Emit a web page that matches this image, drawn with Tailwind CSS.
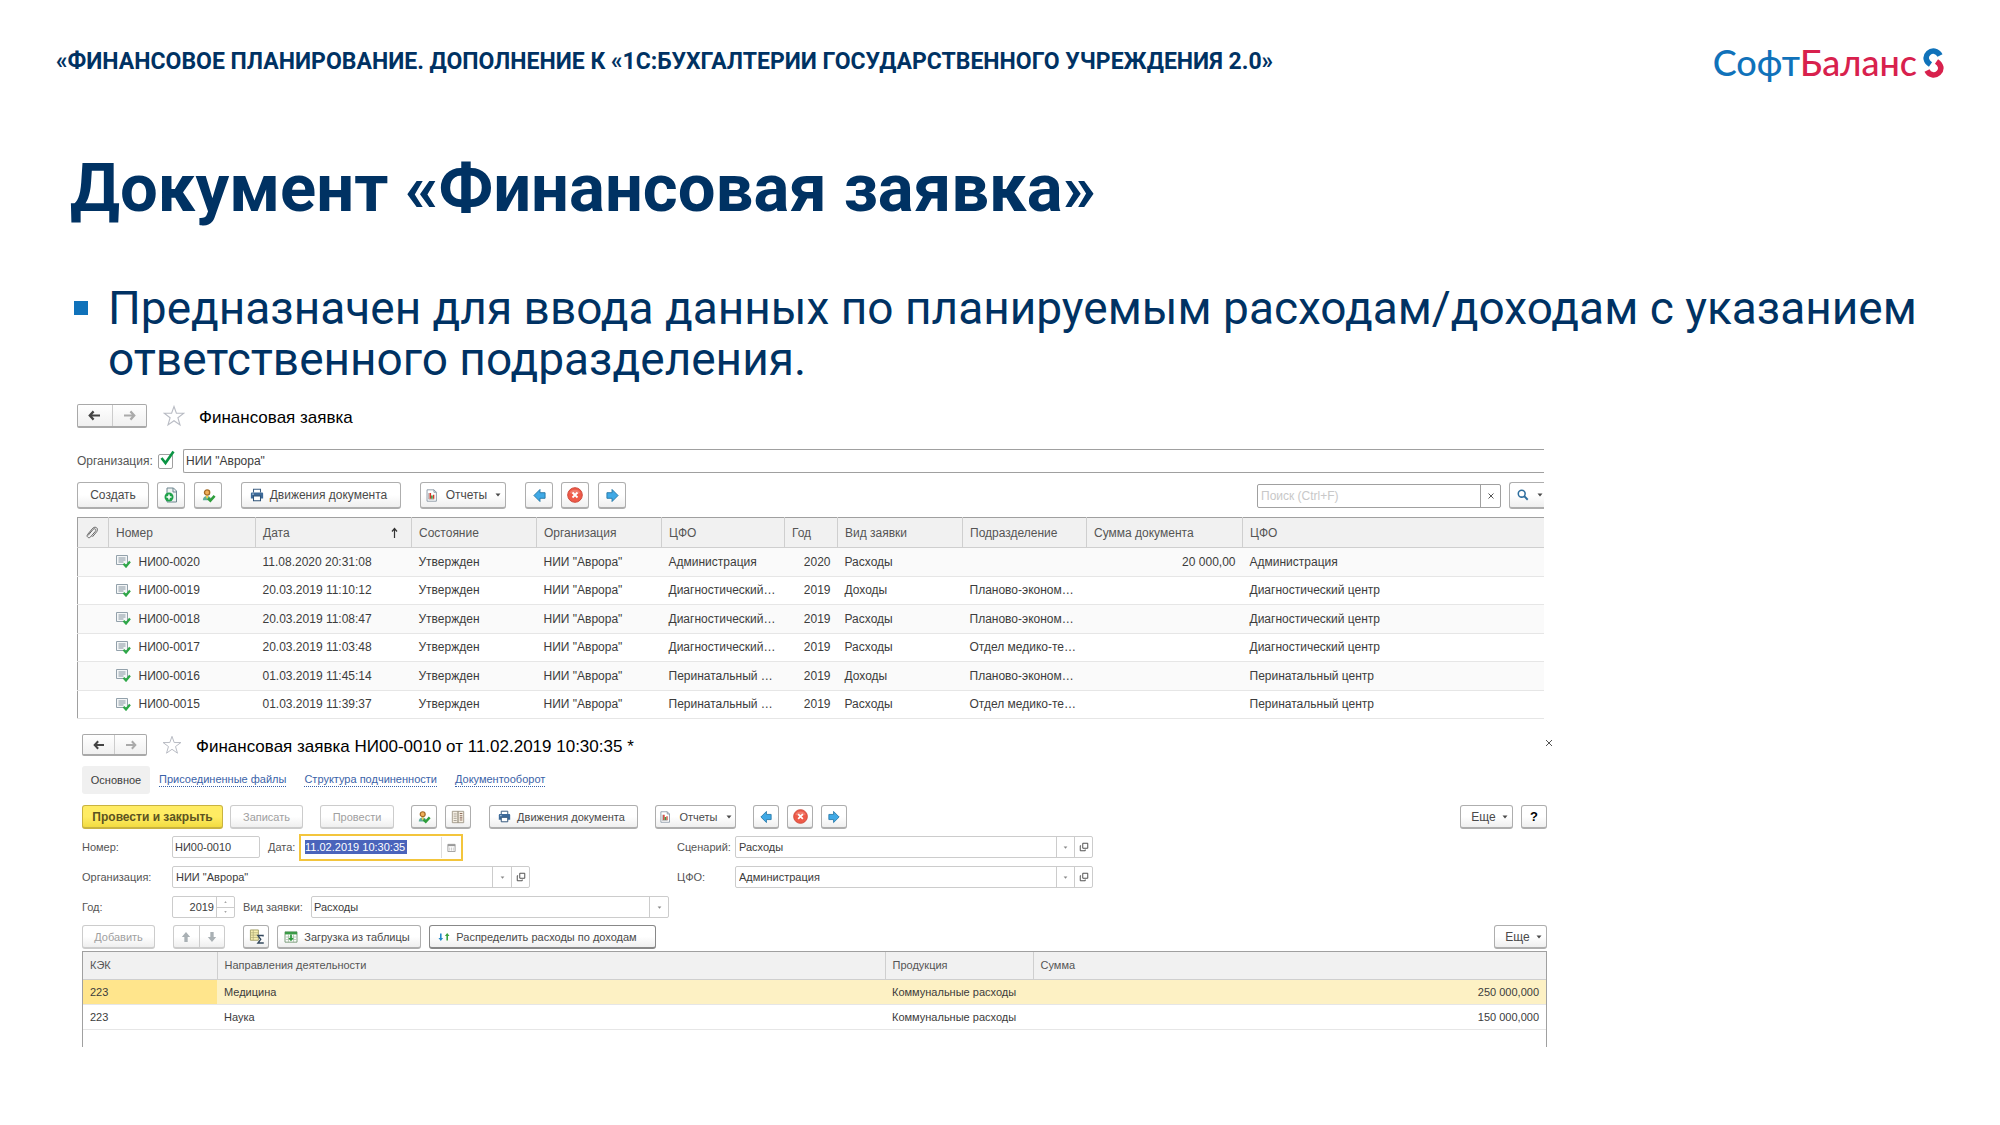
<!DOCTYPE html>
<html lang="ru">
<head>
<meta charset="utf-8">
<title>Документ «Финансовая заявка»</title>
<script src="https://cdn.jsdelivr.net/npm/@tailwindcss/browser@4"></script>
</head>
<body class="bg-white font-['Roboto',sans-serif] text-[#003263]">

<svg class="hidden" aria-hidden="true">
  <symbol id="i-back" viewBox="0 0 14 12"><path d="M6 1.500 1.800 6 6 10.500M2 6h11" fill="none" stroke="currentColor" stroke-width="2.400"/></symbol>
  <symbol id="i-fwd" viewBox="0 0 14 12"><path d="M8 1.500 12.200 6 8 10.500M12 6H1" fill="none" stroke="currentColor" stroke-width="2.400"/></symbol>
  <symbol id="i-star" viewBox="0 0 22 22"><path d="M11 1.500 13.400 8.300H20.800L14.900 12.700 17 20 11 15.700 5 20 7.100 12.700 1.200 8.300H8.600Z" fill="none" stroke="#b9bcc4" stroke-width="1.100"/></symbol>
  <symbol id="i-add" viewBox="0 0 16 16"><path d="M4 1h6.500l3 3v11H4z" fill="#eef3f2" stroke="#6f8790"/><path d="M10 1v4h3.500" fill="none" stroke="#6f8790"/><circle cx="6" cy="10" r="4.500" fill="#1fa14a"/><path d="M6 7.500v5M3.500 10h5" stroke="#fff" stroke-width="1.500"/></symbol>
  <symbol id="i-user" viewBox="0 0 16 16"><path d="M2 13c0-3 2-4.500 4.500-4.500S10.500 10 11 13z" fill="#5fae9b"/><path d="M5 8.500h3L6.500 12z" fill="#f5d54a"/><circle cx="6.500" cy="4.800" r="2.800" fill="#f1b05a" stroke="#a56a25" stroke-width="1.400"/><path d="M7.500 11l2.500 2.500 4.500-5" fill="none" stroke="#2f9e3c" stroke-width="2.800"/></symbol>
  <symbol id="i-print" viewBox="0 0 16 16"><path d="M4 5V1.500h8V5" fill="#fff" stroke="#3d5f82" stroke-width="1.200"/><path d="M2.500 5h11c1 0 1.500.6 1.500 1.500V12H1V6.500C1 5.600 1.500 5 2.500 5z" fill="#3d6a99"/><path d="M4 9h8v5.500H4z" fill="#fff" stroke="#2f5378" stroke-width="1.200"/><path d="M2.500 7h2" stroke="#cfe0ef"/></symbol>
  <symbol id="i-report" viewBox="0 0 16 16"><path d="M2.500 1h8.500l3 3v11H2.500z" fill="#fff" stroke="#7b8a99"/><path d="M11 1v3h3" fill="none" stroke="#7b8a99"/><path d="M4.500 5v7.500h7" fill="none" stroke="#8a8a8a" stroke-width=".8"/><path d="M5.500 5h2v7h-2zM9.800 7h1.700v5H9.800z" fill="#d23a2e"/><path d="M7.500 8h2v4h-2z" fill="#3c9a45"/></symbol>
  <symbol id="i-left" viewBox="0 0 14 16"><path d="M1 8 7.500 1.500V5H13v6H7.500v3.500z" fill="#3fa9e6" stroke="#2678a8"/></symbol>
  <symbol id="i-right" viewBox="0 0 14 16"><path d="M13 8 6.500 1.500V5H1v6h5.500v3.500z" fill="#3fa9e6" stroke="#2678a8"/></symbol>
  <symbol id="i-stop" viewBox="0 0 16 16"><circle cx="8" cy="8" r="7.300" fill="#ee5a48" stroke="#cf4a3c"/><path d="M2.500 6C4 1.500 12 1.500 13.500 6 10 7.500 6 7.500 2.500 6z" fill="#fff" fill-opacity=".2"/><path d="M5.500 5.500l5 5M10.500 5.500l-5 5" stroke="#fff" stroke-width="1.800"/></symbol>
  <symbol id="i-down" viewBox="0 0 6 4"><path d="M.5.5h5L3 3.500z" fill="currentColor"/></symbol>
  <symbol id="i-clip" viewBox="0 0 14 14"><path d="M3 9.500 8 3.500c1.700-1.800 3.800 0 2.400 1.800L5.500 11C4 12.700 1 11 2.500 8.500L7.800 2.200C10.500-.3 14 2.500 11.800 5.600L7.500 10.800" fill="none" stroke="#666"/></symbol>
  <symbol id="i-doc" viewBox="0 0 15 13"><path d="M.5.5h11v9H.5z" fill="#f4f6f7" stroke="#93a1ab"/><path d="M2.500 3h7M2.500 5h7M2.500 7h5" stroke="#8796a1"/><path d="M7.500 8.800 10 11.500 14 6.500" fill="none" stroke="#2fa848" stroke-width="2.200"/></symbol>
  <symbol id="i-open" viewBox="0 0 12 12"><path d="M4.500 1.500h6v6h-6z" fill="none" stroke="#444" stroke-width="1.100"/><path d="M2.500 4.500h-1v6h6v-1.500" fill="none" stroke="#444" stroke-width="1.100"/></symbol>
  <symbol id="i-lens" viewBox="0 0 14 14"><circle cx="5.500" cy="5.500" r="4" fill="none" stroke="#2e6e9e" stroke-width="1.800"/><path d="M8.500 8.500 12.500 12.500" stroke="#2e6e9e" stroke-width="2.200"/></symbol>
  <symbol id="i-cal" viewBox="0 0 10 10"><path d="M1 1.500h8v8H1z" fill="#fff" stroke="#999"/><path d="M1 2.500h8" stroke="#999" stroke-width="2"/><path d="M3 5v3.500M5 5v3.500M7 5v3.500" stroke="#bbb" stroke-width=".8"/></symbol>
  <symbol id="i-dtkt" viewBox="0 0 16 16"><path d="M1.500 1.500h13v13h-13z" fill="#f5efe3" stroke="#9b9384"/><path d="M8 1.500v13" stroke="#9b9384" stroke-width="1.500"/><path d="M3 4.500h3.500M3 7h3.500M3 9.500h3.500M3 12h3.500" stroke="#a19a90"/><path d="M10 4h3M10 6.500h3M10 9h3M10 11.500h3" stroke="#8f6f5f" stroke-width="1.200"/></symbol>
  <symbol id="i-sum" viewBox="0 0 16 16"><path d="M1.500 1h8.500v11H1.500z" fill="#f7efb0" stroke="#a3a06a"/><path d="M1.500 4h8.500M1.500 6.500h8.500M1.500 9h8.500M4.500 1v11" stroke="#b0ad78" stroke-width=".8"/><path d="M15 8V7H9.500l3 4-3 4H15v-1" fill="none" stroke="#34495e" stroke-width="1.500"/></symbol>
  <symbol id="i-load" viewBox="0 0 16 14"><path d="M1 1h14v12H1z" fill="#fff" stroke="#6b8f6b"/><path d="M1 1h14v3H1z" fill="#3b9a46"/><path d="M2 7h12M2 10h12M5 4v9M11 4v9" stroke="#9ab79a" stroke-width=".8"/><path d="M8 12 4.800 8.300H7V4h2v4.300h2.200z" fill="#2c9a3c"/></symbol>
  <symbol id="i-split" viewBox="0 0 12 12"><path d="M2.800 10 .5 7H2V2.500h1.600V7h1.500z" fill="#2289c9"/><path d="M9.200 2 6.900 5H8.400v4.500h1.600V5h1.500z" fill="#3aa23f"/></symbol>
  <symbol id="i-up2" viewBox="0 0 12 14"><path d="M6 1 1 7h3v6h4V7h3z" fill="#a9b0b4"/></symbol>
  <symbol id="i-dn2" viewBox="0 0 12 14"><path d="M6 13 1 7h3V1h4v6h3z" fill="#a9b0b4"/></symbol>
</svg>

<header class="flex items-center justify-between pt-10 pr-14 pl-14">
  <p class="text-[23px] leading-[44px] font-bold whitespace-nowrap">«ФИНАНСОВОЕ ПЛАНИРОВАНИЕ. ДОПОЛНЕНИЕ К «1С:БУХГАЛТЕРИИ ГОСУДАРСТВЕННОГО УЧРЕЖДЕНИЯ 2.0»</p>
  <a href="#" aria-label="СофтБаланс" class="flex items-center gap-[6px]">
    <span class="font-['Lato',sans-serif] text-[36px] leading-[42px] font-medium text-[#d8214d]"><span class="text-[#1072ba]">Софт</span>Баланс</span>
    <svg class="mt-[2px] h-[30px] w-[21px]" viewBox="0 0 21 30"><g fill="none" stroke-width="5.600"><path d="M17 7.500C14.500 2.500 9 1.800 5.500 5 1.500 8.800 3 13.500 7.500 16.500" stroke="#1072ba"/><path d="M4 22.500C6.500 27.500 12 28.200 15.500 25 19.500 21.200 18 16.500 13.500 13.500" stroke="#d8214d"/></g></svg>
  </a>
</header>

<main>
  <h1 class="mt-[58px] pl-[70px] text-[67px] leading-[92px] font-bold">Документ «Финансовая заявка»</h1>

  <ul class="mt-[49px] pr-14 pl-[74px]">
    <li class="flex gap-5 text-[46px] leading-[51px]">
      <span class="mt-[18px] size-[14px] shrink-0 bg-[#1072ba]"></span>
      <span>Предназначен для ввода данных по планируемым расходам/доходам с указанием ответственного подразделения.</span>
    </li>
  </ul>

  <section aria-label="Список заявок" class="mt-[19px] pr-[456px] pl-[77px] font-['Liberation_Sans',Arial,sans-serif] text-[12px] leading-4 text-[#3c3c3c]">
    <div class="flex h-6 items-center">
      <div class="flex h-6 w-[70px] divide-x divide-[#ccc] rounded-[2px] border border-b-2 border-[#a9a9a9] bg-linear-to-b from-white to-[#f0f0f0]">
        <button aria-label="Назад" class="flex flex-1 items-center justify-center text-[#444]"><svg class="h-[11px] w-[13px]"><use href="#i-back"/></svg></button>
        <button aria-label="Вперед" class="flex flex-1 items-center justify-center text-[#aaa]"><svg class="h-[11px] w-[13px]"><use href="#i-fwd"/></svg></button>
      </div>
      <button aria-label="В избранное" class="ml-4"><svg class="size-[22px]"><use href="#i-star"/></svg></button>
      <h2 class="mt-1 ml-[14px] text-[17px] leading-6 text-black">Финансовая заявка</h2>
    </div>

    <div class="mt-[21px] flex h-6 items-center">
      <label for="orgOn" class="w-[81px] text-[#555]">Организация:</label>
      <span class="relative flex">
        <input id="orgOn" type="checkbox" checked class="size-[15px] appearance-none rounded-[2px] border border-[#a0a0a0] bg-white">
        <svg class="pointer-events-none absolute -top-1 left-[2px] h-4 w-[15px]" viewBox="0 0 15 16"><path d="M1.500 8 5.500 13 13.500 1.500" fill="none" stroke="#0b9444" stroke-width="2.600"/></svg>
      </span>
      <input aria-label="Организация" value='НИИ "Аврора"' class="ml-[10px] h-6 min-w-0 flex-1 rounded-l-[2px] border border-r-0 border-[#a0a0a0] px-[2px]">
    </div>

    <div class="mt-[9px] flex items-center text-[#4a4a4a] [&>button]:flex [&>button]:h-[27px] [&>button]:items-center [&>button]:justify-center [&>button]:rounded-[3px] [&>button]:border [&>button]:border-b-2 [&>button]:border-[#aeaeae] [&>button]:bg-linear-to-b [&>button]:from-white [&>button]:from-50% [&>button]:to-[#efefef]">
      <button class="w-[72px]">Создать</button>
      <button aria-label="Создать копированием" class="ml-2 w-7"><svg class="size-4"><use href="#i-add"/></svg></button>
      <button aria-label="Согласовать" class="ml-[9px] w-7"><svg class="size-[15px]"><use href="#i-user"/></svg></button>
      <button class="ml-[19px] w-[160px] gap-[6px] pr-[5px]"><svg class="size-[14px]"><use href="#i-print"/></svg>Движения документа</button>
      <button class="ml-[19px] w-[86px] gap-2"><svg class="h-[15px] w-[13px]"><use href="#i-report"/></svg>Отчеты<svg class="h-1 w-[6px]"><use href="#i-down"/></svg></button>
      <button aria-label="Предыдущий" class="ml-[19px] w-7"><svg class="h-[15px] w-[13px]"><use href="#i-left"/></svg></button>
      <button aria-label="Отменить" class="ml-2 w-7"><svg class="size-4"><use href="#i-stop"/></svg></button>
      <button aria-label="Следующий" class="ml-[9px] w-7"><svg class="h-[15px] w-[13px]"><use href="#i-right"/></svg></button>
      <div class="ml-auto flex h-6 w-[244px] rounded-[2px] border border-[#a0a0a0]">
        <input aria-label="Поиск" placeholder="Поиск (Ctrl+F)" class="min-w-0 flex-1 px-[3px] placeholder:text-[#c8c8c8]">
        <button aria-label="Очистить" class="flex w-5 items-center justify-center border-l border-[#a0a0a0]"><svg class="size-[6px]" viewBox="0 0 6 6"><path d="M.5.5l5 5M5.500.5l-5 5" stroke="#555"/></svg></button>
      </div>
      <button aria-label="Найти" class="ml-2 w-[35px] gap-2 rounded-r-none! border-r-0! pl-[5px]"><svg class="size-3"><use href="#i-lens"/></svg><svg class="h-1 w-[6px]"><use href="#i-down"/></svg></button>
    </div>

    <table class="mt-2 h-[202px] w-full table-fixed border-t border-l border-[#a0a0a0] text-left [&_td]:truncate [&_td]:px-[7px] [&_td]:py-0 [&_th]:border-r [&_th]:border-[#cfcfcf] [&_th]:px-[7px] [&_th]:font-normal [&_th]:text-[#555] [&_th:last-child]:border-r-0 [&_tbody_tr]:border-b [&_tbody_tr]:border-[#e6e6e6] [&_tbody_tr:nth-child(odd)]:bg-[#fafafa]">
      <colgroup><col class="w-[31px]"><col class="w-[147px]"><col class="w-[156px]"><col class="w-[125px]"><col class="w-[125px]"><col class="w-[123px]"><col class="w-[53px]"><col class="w-[125px]"><col class="w-[124px]"><col class="w-[156px]"><col></colgroup>
      <thead><tr class="h-[30px] border-b border-[#cfcfcf] bg-[#f1f1f1]">
        <th aria-label="Файлы"><svg class="size-[14px]"><use href="#i-clip"/></svg></th><th>Номер</th>
        <th><span class="flex justify-between pr-[6px]">Дата<svg class="mt-[2px] h-3 w-[7px]" viewBox="0 0 7 12"><path d="M3.500 11V2M1 4.500 3.500 1.500 6 4.500" fill="none" stroke="#333" stroke-width="1.200"/></svg></span></th>
        <th>Состояние</th><th>Организация</th><th>ЦФО</th><th>Год</th><th>Вид заявки</th><th>Подразделение</th><th>Сумма документа</th><th>ЦФО</th>
      </tr></thead>
      <tbody>
        <tr><td></td><td><span class="flex items-center gap-2"><svg class="h-[13px] w-[15px]"><use href="#i-doc"/></svg>НИ00-0020</span></td><td>11.08.2020 20:31:08</td><td>Утвержден</td><td>НИИ "Аврора"</td><td>Администрация</td><td class="text-right">2020</td><td>Расходы</td><td></td><td class="text-right">20 000,00</td><td>Администрация</td></tr>
        <tr><td></td><td><span class="flex items-center gap-2"><svg class="h-[13px] w-[15px]"><use href="#i-doc"/></svg>НИ00-0019</span></td><td>20.03.2019 11:10:12</td><td>Утвержден</td><td>НИИ "Аврора"</td><td>Диагностический…</td><td class="text-right">2019</td><td>Доходы</td><td>Планово-эконом…</td><td></td><td>Диагностический центр</td></tr>
        <tr><td></td><td><span class="flex items-center gap-2"><svg class="h-[13px] w-[15px]"><use href="#i-doc"/></svg>НИ00-0018</span></td><td>20.03.2019 11:08:47</td><td>Утвержден</td><td>НИИ "Аврора"</td><td>Диагностический…</td><td class="text-right">2019</td><td>Расходы</td><td>Планово-эконом…</td><td></td><td>Диагностический центр</td></tr>
        <tr><td></td><td><span class="flex items-center gap-2"><svg class="h-[13px] w-[15px]"><use href="#i-doc"/></svg>НИ00-0017</span></td><td>20.03.2019 11:03:48</td><td>Утвержден</td><td>НИИ "Аврора"</td><td>Диагностический…</td><td class="text-right">2019</td><td>Расходы</td><td>Отдел медико-те…</td><td></td><td>Диагностический центр</td></tr>
        <tr><td></td><td><span class="flex items-center gap-2"><svg class="h-[13px] w-[15px]"><use href="#i-doc"/></svg>НИ00-0016</span></td><td>01.03.2019 11:45:14</td><td>Утвержден</td><td>НИИ "Аврора"</td><td>Перинатальный …</td><td class="text-right">2019</td><td>Доходы</td><td>Планово-эконом…</td><td></td><td>Перинатальный центр</td></tr>
        <tr><td></td><td><span class="flex items-center gap-2"><svg class="h-[13px] w-[15px]"><use href="#i-doc"/></svg>НИ00-0015</span></td><td>01.03.2019 11:39:37</td><td>Утвержден</td><td>НИИ "Аврора"</td><td>Перинатальный …</td><td class="text-right">2019</td><td>Расходы</td><td>Отдел медико-те…</td><td></td><td>Перинатальный центр</td></tr>
      </tbody>
    </table>
  </section>

  <section aria-label="Карточка заявки" class="mt-[15px] pr-[453px] pl-[82px] font-['Liberation_Sans',Arial,sans-serif] text-[11px] leading-4 text-[#3c3c3c]">
    <div class="flex h-[22px] items-center">
      <div class="flex h-[22px] w-[65px] divide-x divide-[#ccc] rounded-[2px] border border-b-2 border-[#a9a9a9] bg-linear-to-b from-white to-[#f0f0f0]">
        <button aria-label="Назад" class="flex flex-1 items-center justify-center text-[#444]"><svg class="h-[10px] w-3"><use href="#i-back"/></svg></button>
        <button aria-label="Вперед" class="flex flex-1 items-center justify-center text-[#aaa]"><svg class="h-[10px] w-3"><use href="#i-fwd"/></svg></button>
      </div>
      <button aria-label="В избранное" class="ml-[15px]"><svg class="size-5"><use href="#i-star"/></svg></button>
      <h2 class="ml-[14px] pt-1 text-[17px] leading-[22px] text-black">Финансовая заявка НИ00-0010 от 11.02.2019 10:30:35 *</h2>
      <button aria-label="Закрыть" class="-mr-[6px] mb-1 ml-auto"><svg class="size-2" viewBox="0 0 8 8"><path d="M1 1l6 6M7 1 1 7" stroke="#555"/></svg></button>
    </div>

    <nav class="mt-[10px] flex h-7 items-center [&>a]:border-b [&>a]:border-dotted [&>a]:border-[#3a62a8] [&>a]:leading-[13px] [&>a]:text-[#3a62a8]">
      <span class="flex h-7 w-[68px] items-center justify-center rounded-[3px] bg-[#f0f0f0]">Основное</span>
      <a href="#" class="ml-[9px]">Присоединенные файлы</a>
      <a href="#" class="ml-[18px]">Структура подчиненности</a>
      <a href="#" class="ml-[18px]">Документооборот</a>
    </nav>

    <div class="mt-[11px] flex items-center text-[#4a4a4a] [&>button]:flex [&>button]:h-6 [&>button]:items-center [&>button]:justify-center [&>button]:rounded-[3px] [&>button]:border [&>button]:border-b-2 [&>button]:border-[#aeaeae] [&>button]:bg-linear-to-b [&>button]:from-white [&>button]:from-50% [&>button]:to-[#efefef] [&>button:disabled]:border-[#ccc] [&>button:disabled]:text-[#a0a0a0]">
      <button class="w-[141px] border-[#c9b340]! from-[#ffec64]! to-[#f2dc3f]! text-[12px] font-bold text-[#5c5320]">Провести и закрыть</button>
      <button disabled class="ml-[7px] w-[73px]">Записать</button>
      <button disabled class="ml-[17px] w-[74px]">Провести</button>
      <button aria-label="Согласовать" class="ml-[17px] w-[26px]"><svg class="size-[14px]"><use href="#i-user"/></svg></button>
      <button aria-label="Проводки" class="ml-2 w-[26px]"><svg class="size-[14px]"><use href="#i-dtkt"/></svg></button>
      <button class="ml-[18px] w-[149px] gap-[6px] pr-1"><svg class="size-[13px]"><use href="#i-print"/></svg>Движения документа</button>
      <button class="ml-[17px] w-[81px] gap-2"><svg class="h-[14px] w-[12px]"><use href="#i-report"/></svg>Отчеты<svg class="h-1 w-[6px]"><use href="#i-down"/></svg></button>
      <button aria-label="Предыдущий" class="ml-[17px] w-[26px]"><svg class="h-[14px] w-[12px]"><use href="#i-left"/></svg></button>
      <button aria-label="Отменить" class="ml-2 w-[26px]"><svg class="size-[15px]"><use href="#i-stop"/></svg></button>
      <button aria-label="Следующий" class="ml-2 w-[26px]"><svg class="h-[14px] w-[12px]"><use href="#i-right"/></svg></button>
      <button class="ml-auto w-[53px] gap-[6px] pl-[6px] text-[12px]">Еще<svg class="h-1 w-[6px]"><use href="#i-down"/></svg></button>
      <button aria-label="Справка" class="ml-2 w-[26px] text-[13px] font-bold text-black">?</button>
    </div>

    <div class="mt-[5px] grid grid-cols-[595px_416px] [&_label]:text-[#555]">
      <div class="flex h-[26px] items-center">
        <label for="num" class="w-[90px]">Номер:</label>
        <input id="num" value="НИ00-0010" class="h-[22px] w-[88px] rounded-[2px] border border-[#ccc] px-[2px]">
        <label for="date" class="ml-2 w-[31px]">Дата:</label>
        <div class="flex h-[27px] w-[164px] items-center border-2 border-[#f3c53c] pl-1">
          <input id="date" value="11.02.2019 10:30:35" class="h-[14px] w-[102px] bg-[#4a64bb] text-white">
          <button aria-label="Календарь" class="ml-auto flex h-[21px] w-5 items-center justify-center border-l border-[#ddd]"><svg class="size-[9px]"><use href="#i-cal"/></svg></button>
        </div>
      </div>
      <div class="flex h-[26px] items-center">
        <label for="scen" class="w-[58px]">Сценарий:</label>
        <div class="flex h-[22px] flex-1 rounded-[2px] border border-[#ccc]">
          <div class="relative flex flex-1">
            <select id="scen" class="w-full appearance-none px-[3px]"><option>Расходы</option></select>
            <span class="pointer-events-none absolute inset-y-0 right-0 flex w-[18px] items-center justify-center border-l border-[#ccc] text-[#888]"><svg class="h-[3px] w-[5px]"><use href="#i-down"/></svg></span>
          </div>
          <button aria-label="Открыть" class="flex w-[18px] items-center justify-center border-l border-[#ccc]"><svg class="size-[10px]"><use href="#i-open"/></svg></button>
        </div>
      </div>
      <div class="mt-[6px] flex h-[22px] items-center">
        <label for="org" class="w-[90px]">Организация:</label>
        <div class="flex h-[22px] w-[358px] rounded-[2px] border border-[#ccc]">
          <div class="relative flex flex-1">
            <select id="org" class="w-full appearance-none px-[3px]"><option>НИИ "Аврора"</option></select>
            <span class="pointer-events-none absolute inset-y-0 right-0 flex w-[19px] items-center justify-center border-l border-[#ccc] text-[#888]"><svg class="h-[3px] w-[5px]"><use href="#i-down"/></svg></span>
          </div>
          <button aria-label="Открыть" class="flex w-[18px] items-center justify-center border-l border-[#ccc]"><svg class="size-[10px]"><use href="#i-open"/></svg></button>
        </div>
      </div>
      <div class="mt-[6px] flex h-[22px] items-center">
        <label for="cfo" class="w-[58px]">ЦФО:</label>
        <div class="flex h-[22px] flex-1 rounded-[2px] border border-[#ccc]">
          <div class="relative flex flex-1">
            <select id="cfo" class="w-full appearance-none px-[3px]"><option>Администрация</option></select>
            <span class="pointer-events-none absolute inset-y-0 right-0 flex w-[18px] items-center justify-center border-l border-[#ccc] text-[#888]"><svg class="h-[3px] w-[5px]"><use href="#i-down"/></svg></span>
          </div>
          <button aria-label="Открыть" class="flex w-[18px] items-center justify-center border-l border-[#ccc]"><svg class="size-[10px]"><use href="#i-open"/></svg></button>
        </div>
      </div>
      <div class="mt-2 flex h-[22px] items-center">
        <label for="year" class="w-[90px]">Год:</label>
        <div class="flex h-[22px] w-[63px] shrink-0 rounded-[2px] border border-[#ccc]">
          <input id="year" value="2019" class="min-w-0 flex-1 pr-[2px] text-right">
          <div class="flex w-[18px] flex-col divide-y divide-[#ccc] border-l border-[#ccc] text-[#888]">
            <button aria-label="Больше" class="flex flex-1 items-center justify-center"><svg class="h-[2px] w-[3px] rotate-180"><use href="#i-down"/></svg></button>
            <button aria-label="Меньше" class="flex flex-1 items-center justify-center"><svg class="h-[2px] w-[3px]"><use href="#i-down"/></svg></button>
          </div>
        </div>
        <label for="kind" class="ml-2 w-[68px] shrink-0">Вид заявки:</label>
        <div class="relative flex h-[22px] w-[358px] rounded-[2px] border border-[#ccc]">
          <select id="kind" class="w-full appearance-none px-[2px]"><option>Расходы</option></select>
          <span class="pointer-events-none absolute inset-y-0 right-0 flex w-[19px] items-center justify-center border-l border-[#ccc] text-[#888]"><svg class="h-[3px] w-[5px]"><use href="#i-down"/></svg></span>
        </div>
      </div>
    </div>

    <div class="mt-[7px] flex items-center text-[#4a4a4a] [&>button]:flex [&>button]:h-6 [&>button]:items-center [&>button]:justify-center [&>button]:rounded-[3px] [&>button]:border [&>button]:border-b-2 [&>button]:border-[#aeaeae] [&>button]:bg-linear-to-b [&>button]:from-white [&>button]:from-50% [&>button]:to-[#efefef] [&>button:disabled]:border-[#ccc] [&>button:disabled]:text-[#a0a0a0]">
      <button disabled class="w-[73px]">Добавить</button>
      <div class="ml-[18px] flex h-6 w-[52px] divide-x divide-[#ccc] rounded-[3px] border border-b-2 border-[#ccc] bg-linear-to-b from-white from-50% to-[#efefef]">
        <button aria-label="Вверх" disabled class="flex flex-1 items-center justify-center"><svg class="h-3 w-[10px]"><use href="#i-up2"/></svg></button>
        <button aria-label="Вниз" disabled class="flex flex-1 items-center justify-center"><svg class="h-3 w-[10px]"><use href="#i-dn2"/></svg></button>
      </div>
      <button aria-label="Сумма" class="ml-[18px] w-[26px]"><svg class="size-[15px]"><use href="#i-sum"/></svg></button>
      <button class="ml-2 w-[144px] gap-[6px] pr-1"><svg class="h-3 w-[14px]"><use href="#i-load"/></svg>Загрузка из таблицы</button>
      <button class="ml-2 w-[227px] gap-[6px] border-[#888]! pr-[10px]"><svg class="size-3"><use href="#i-split"/></svg>Распределить расходы по доходам</button>
      <button class="ml-auto w-[53px] gap-[6px] pl-[6px] text-[12px]">Еще<svg class="h-1 w-[6px]"><use href="#i-down"/></svg></button>
    </div>

    <div class="mt-[2px] h-[96px] border-x border-t border-[#a0a0a0]">
      <table class="w-full table-fixed text-left [&_td]:px-[7px] [&_td]:py-0 [&_th]:border-r [&_th]:border-[#cfcfcf] [&_th]:px-[7px] [&_th]:font-normal [&_th]:text-[#555] [&_th:last-child]:border-r-0">
        <colgroup><col class="w-[134px]"><col class="w-[668px]"><col class="w-[148px]"><col></colgroup>
        <thead><tr class="h-[27px] border-b border-[#cfcfcf] bg-[#f1f1f1]"><th>КЭК</th><th>Направления деятельности</th><th>Продукция</th><th>Сумма</th></tr></thead>
        <tbody>
          <tr class="h-[25px] border-b border-[#e6e6e6] bg-[#fdf1c4]"><td class="bg-[#ffe58c]">223</td><td>Медицина</td><td>Коммунальные расходы</td><td class="text-right">250 000,000</td></tr>
          <tr class="h-[25px] border-b border-[#e6e6e6]"><td>223</td><td>Наука</td><td>Коммунальные расходы</td><td class="text-right">150 000,000</td></tr>
        </tbody>
      </table>
    </div>
  </section>
</main>
</body>
</html>
